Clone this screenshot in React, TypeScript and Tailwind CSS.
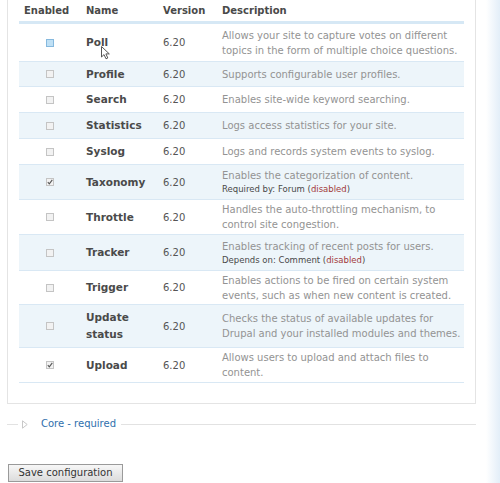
import React from "react";

type Row = {
  name: string;
  desc: string;
  h: string;
  even: boolean;
  checked?: boolean;
  focus?: boolean;
  dep?: { label: string; mod: string };
};

const rows: Row[] = [
  { name: "Poll", desc: "Allows your site to capture votes on different topics in the form of multiple choice questions.", h: "h-[38px]", even: false, focus: true },
  { name: "Profile", desc: "Supports configurable user profiles.", h: "h-[25px]", even: true },
  { name: "Search", desc: "Enables site-wide keyword searching.", h: "h-[26px]", even: false },
  { name: "Statistics", desc: "Logs access statistics for your site.", h: "h-[26px]", even: true },
  { name: "Syslog", desc: "Logs and records system events to syslog.", h: "h-[26px]", even: false },
  { name: "Taxonomy", desc: "Enables the categorization of content.", h: "h-[35px]", even: true, checked: true, dep: { label: "Required by:", mod: "Forum" } },
  { name: "Throttle", desc: "Handles the auto-throttling mechanism, to control site congestion.", h: "h-[35px]", even: false },
  { name: "Tracker", desc: "Enables tracking of recent posts for users.", h: "h-[36px]", even: true, dep: { label: "Depends on:", mod: "Comment" } },
  { name: "Trigger", desc: "Enables actions to be fired on certain system events, such as when new content is created.", h: "h-[34px]", even: false },
  { name: "Update status", desc: "Checks the status of available updates for Drupal and your installed modules and themes.", h: "h-[43px]", even: true },
  { name: "Upload", desc: "Allows users to upload and attach files to content.", h: "h-[35px]", even: false, checked: true },
];

function Checkbox({ checked, focus }: { checked?: boolean; focus?: boolean }) {
  return (
    <div
      className={
        focus
          ? "w-[8px] h-[8px] border border-[#86b9de] bg-[#bfe0f5]"
          : "w-[8px] h-[8px] border border-[#c4c4c4] bg-[#f2f2f2] flex items-center justify-center"
      }
    >
      {checked && (
        <svg width="6" height="6" viewBox="0 0 6 6">
          <path d="M0.8 3.2 L2.3 4.8 L5.3 0.9" stroke="#555" strokeWidth="1.1" fill="none" />
        </svg>
      )}
    </div>
  );
}

export default function App() {
  return (
    <div className="relative w-[500px] h-[483px] bg-white flex overflow-hidden font-['DejaVu_Sans',sans-serif]">
      <div className="w-[486px] flex flex-col">
        <div className="ml-[7px] w-[469px] border-l border-r border-b border-[#e4e4e4] px-[11px] pb-[20px]">
          <div className="w-[445px]">
            <div className="grid grid-cols-[62px_77px_59px_247px] h-[24px] border-b-[3px] border-[#d6e8f5] text-[10px] font-bold text-[#494949] items-center">
              <div className="pl-[5px]">Enabled</div>
              <div className="pl-[5px]">Name</div>
              <div className="pl-[5px]">Version</div>
              <div className="pl-[5px]">Description</div>
            </div>
            {rows.map((r) => (
              <div
                key={r.name}
                className={
                  "grid grid-cols-[62px_77px_59px_247px] items-center border-b border-[#d9e8f4] " +
                  r.h +
                  (r.even ? " bg-[#edf5fa]" : " bg-white")
                }
              >
                <div className="flex justify-center">
                  <Checkbox checked={r.checked} focus={r.focus} />
                </div>
                <div className="pl-[5px] pr-[2px] text-[10.5px] font-bold text-[#4a4a4a] leading-[17px]">{r.name}</div>
                <div className="pl-[5px] text-[10px] text-[#555555]">6.20</div>
                <div className="pl-[5px] pr-[2px]">
                  <div className="text-[10px] leading-[15px] text-[#939393]">{r.desc}</div>
                  {r.dep && (
                    <div className="text-[8.5px] leading-[13px] text-[#494949]">
                      {r.dep.label} {r.dep.mod} (<span className="text-[#a23a3a]">disabled</span>)
                    </div>
                  )}
                </div>
              </div>
            ))}
          </div>
        </div>

        <div className="mt-[13px] h-[14px] w-[476px] flex items-center">
          <div className="ml-[7px] w-[11px] h-px bg-[#e2e2e2]" />
          <svg className="ml-[4px]" width="6" height="9" viewBox="0 0 6 9">
            <path d="M0.5 0.8 L5.2 4.5 L0.5 8.2 Z" fill="none" stroke="#c8c8c8" strokeWidth="1" />
          </svg>
          <span className="ml-[13px] text-[10px] text-[#2f6fad] leading-none">Core - required</span>
          <div className="ml-[5px] flex-1 h-px bg-[#e2e2e2]" />
        </div>

        <div className="ml-[8px] mt-[33px]">
          <button className="h-[18px] w-[115px] border border-[#9a9a9a] bg-gradient-to-b from-[#f7f7f7] to-[#dcdcdc] text-[10px] text-[#333] leading-none flex items-center justify-center">
            Save configuration
          </button>
        </div>
      </div>
      <div className="w-[14px] h-full bg-gradient-to-r from-white to-[#e3eef8]" />

      <svg className="absolute left-[101px] top-[46px]" width="10" height="14" viewBox="0 0 10 14">
        <path d="M0.5 0.5 L0.5 11 L3 8.6 L5 12.8 L6.8 12 L4.9 7.9 L8.3 7.9 Z" fill="#fff" stroke="#555" strokeWidth="1" />
      </svg>
    </div>
  );
}
